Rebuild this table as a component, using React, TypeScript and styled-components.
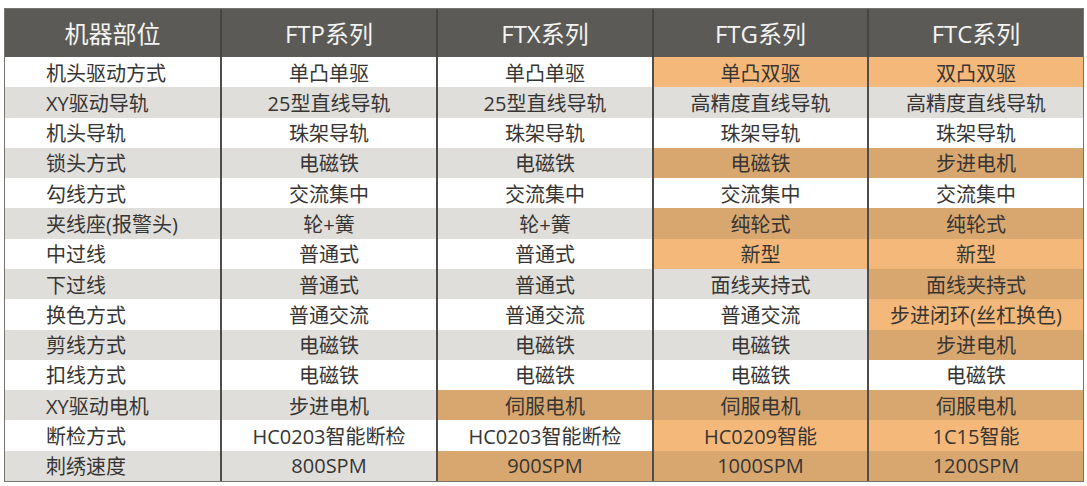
import React from "react";
import styled, { createGlobalStyle } from "styled-components";

const GlobalStyle = createGlobalStyle`
  html, body { margin: 0; padding: 0; background: #ffffff; }
  body { font-family: "Open Sans", "Noto Sans CJK SC", sans-serif; }
`;

const Page = styled.div`
  padding: 8px 0 0 4px;
  width: 1087px;
  height: 486px;
  box-sizing: border-box;
`;

const Table = styled.div`
  width: 1080px;
  height: 474px;
  box-sizing: border-box;
  border: 1px solid #77736f;
  display: flex;
  flex-direction: column;
`;

const COLS = "215px 216px 216px 215px 216px";

const HeaderRow = styled.div`
  display: grid;
  grid-template-columns: ${COLS};
  height: 48px;
  flex: none;
  background: #5b5a56;
`;

const HeaderCell = styled.div<{ $first?: boolean }>`
  display: flex;
  align-items: center;
  justify-content: center;
  color: #f4f4f2;
  font-size: 24px;
  font-family: "Open Sans", "Noto Sans CJK SC", sans-serif;
  border-left: ${(p) => (p.$first ? "none" : "2px solid #464542")};
  padding-bottom: 1px;
`;

const BodyRow = styled.div<{ $alt: boolean }>`
  display: grid;
  grid-template-columns: ${COLS};
  flex: 1;
  background: ${(p) => (p.$alt ? "#e0dedb" : "#ffffff")};
`;

const Cell = styled.div<{ $first?: boolean; $hl?: boolean; $alt: boolean }>`
  display: flex;
  align-items: center;
  justify-content: ${(p) => (p.$first ? "flex-start" : "center")};
  padding-left: ${(p) => (p.$first ? "41px" : "0")};
  font-size: 20px;
  color: #363533;
  white-space: nowrap;
  border-left: ${(p) => (p.$first ? "none" : "2px solid #4e4d4a")};
  background: ${(p) =>
    p.$hl ? (p.$alt ? "#d8a770" : "#f4b97a") : "transparent"};
`;

const headers = ["机器部位", "FTP系列", "FTX系列", "FTG系列", "FTC系列"];

type RowData = { label: string; values: string[]; hl: boolean[] };

const rows: RowData[] = [
  { label: "机头驱动方式", values: ["单凸单驱", "单凸单驱", "单凸双驱", "双凸双驱"], hl: [false, false, true, true] },
  { label: "XY驱动导轨", values: ["25型直线导轨", "25型直线导轨", "高精度直线导轨", "高精度直线导轨"], hl: [false, false, false, false] },
  { label: "机头导轨", values: ["珠架导轨", "珠架导轨", "珠架导轨", "珠架导轨"], hl: [false, false, false, false] },
  { label: "锁头方式", values: ["电磁铁", "电磁铁", "电磁铁", "步进电机"], hl: [false, false, true, true] },
  { label: "勾线方式", values: ["交流集中", "交流集中", "交流集中", "交流集中"], hl: [false, false, false, false] },
  { label: "夹线座(报警头)", values: ["轮+簧", "轮+簧", "纯轮式", "纯轮式"], hl: [false, false, true, true] },
  { label: "中过线", values: ["普通式", "普通式", "新型", "新型"], hl: [false, false, true, true] },
  { label: "下过线", values: ["普通式", "普通式", "面线夹持式", "面线夹持式"], hl: [false, false, false, true] },
  { label: "换色方式", values: ["普通交流", "普通交流", "普通交流", "步进闭环(丝杠换色)"], hl: [false, false, false, true] },
  { label: "剪线方式", values: ["电磁铁", "电磁铁", "电磁铁", "步进电机"], hl: [false, false, false, true] },
  { label: "扣线方式", values: ["电磁铁", "电磁铁", "电磁铁", "电磁铁"], hl: [false, false, false, false] },
  { label: "XY驱动电机", values: ["步进电机", "伺服电机", "伺服电机", "伺服电机"], hl: [false, true, true, true] },
  { label: "断检方式", values: ["HC0203智能断检", "HC0203智能断检", "HC0209智能", "1C15智能"], hl: [false, false, true, true] },
  { label: "刺绣速度", values: ["800SPM", "900SPM", "1000SPM", "1200SPM"], hl: [false, true, true, true] },
];

export default function App() {
  return (
    <>
      <GlobalStyle />
      <Page>
        <Table>
          <HeaderRow>
            {headers.map((h, i) => (
              <HeaderCell key={h} $first={i === 0}>
                {h}
              </HeaderCell>
            ))}
          </HeaderRow>
          {rows.map((r, ri) => {
            const alt = ri % 2 === 1;
            return (
              <BodyRow key={r.label} $alt={alt}>
                <Cell $first $alt={alt}>
                  {r.label}
                </Cell>
                {r.values.map((v, ci) => (
                  <Cell key={ci} $alt={alt} $hl={r.hl[ci]}>
                    {v}
                  </Cell>
                ))}
              </BodyRow>
            );
          })}
        </Table>
      </Page>
    </>
  );
}
